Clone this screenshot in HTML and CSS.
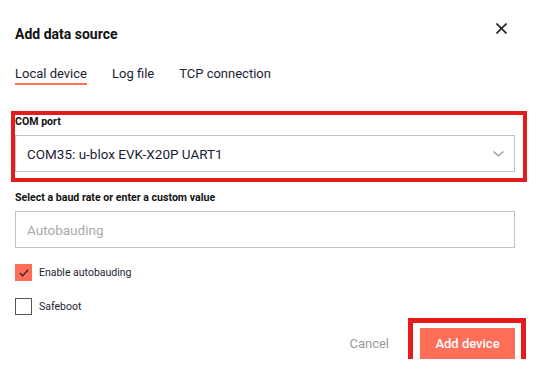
FILE: index.html
```html
<!DOCTYPE html>
<html lang="en">
<head>
    <meta charset="UTF-8">
    <title>Add data source</title>
    <link rel="stylesheet" href="styles.css">
</head>
<body>
    <div class="dialog">
        <div class="dialog-header">
            <h2 class="dialog-title">Add data source</h2>
            <button class="close-btn" aria-label="Close">
                <svg width="11" height="11" viewBox="0 0 11 11">
                    <path d="M0.5 0.5 L10.5 10.5 M10.5 0.5 L0.5 10.5" stroke="#222" stroke-width="1.6" fill="none"/>
                </svg>
            </button>
        </div>

        <div class="tabs">
            <span class="tab active">Local device</span>
            <span class="tab">Log file</span>
            <span class="tab">TCP connection</span>
        </div>

        <!-- COM port field, with the red annotation box -->
        <div class="field field-com marked">
            <label class="field-label">COM port</label>
            <div class="select">
                <span>COM35: u-blox EVK-X20P UART1</span>
                <svg class="chevron" width="11" height="6" viewBox="0 0 11 6">
                    <path d="M0.5 0.5 L5.5 5 L10.5 0.5" stroke="#999" stroke-width="1.3" fill="none"/>
                </svg>
            </div>
            <span class="mark mark-com"></span>
        </div>

        <div class="field field-baud">
            <label class="field-label">Select a baud rate or enter a custom value</label>
            <input class="text-input" type="text" placeholder="Autobauding">
        </div>

        <div class="checks">
            <label class="check">
                <span class="box checked">
                    <svg width="10" height="8" viewBox="0 0 10 8">
                        <path d="M0.8 4 L3.6 6.8 L9.2 0.8" stroke="#2b2b2b" stroke-width="1.3" fill="none"/>
                    </svg>
                </span>
                Enable autobauding
            </label>
            <label class="check">
                <span class="box"></span>
                Safeboot
            </label>
        </div>

        <div class="dialog-footer">
            <button class="btn-cancel">Cancel</button>
            <div class="marked">
                <button class="btn-primary">Add device</button>
                <span class="mark mark-add"></span>
            </div>
        </div>
    </div>
</body>
</html>
```

FILE: styles.css
```css
body {
    margin: 0;
    padding: 0;
    background: #fff;
    font-family: Roboto, "Noto Sans", sans-serif;
    color: #1b1d33;
}

.dialog {
    width: 500px;
    padding: 22px 23px 0 15px;
}

.dialog-header {
    display: flex;
    justify-content: space-between;
    align-items: flex-start;
    height: 24px;
}

.dialog-title {
    margin: 0;
    font-size: 14px;
    line-height: 24px;
    font-weight: 700;
    color: #111;
}

.close-btn {
    border: none;
    background: none;
    padding: 0;
    margin: 1px 8px 0 0;
    width: 11px;
    height: 11px;
    display: flex;
    cursor: pointer;
}

.tabs {
    display: flex;
    gap: 25px;
    margin-top: 20px;
}

.tab {
    font-size: 13px;
    line-height: 16px;
    padding-bottom: 1px;
    border-bottom: 2px solid transparent;
    color: #1b1d33;
}

.tab.active {
    border-bottom-color: #ff6e59;
}

.field {
    display: flex;
    flex-direction: column;
}

.field-com {
    margin-top: 31px;
}

.field-baud {
    margin-top: 20px;
}

.field-label {
    font-size: 10.6px;
    line-height: 12px;
    font-weight: 700;
    color: #111;
    margin-bottom: 7px;
}

.select,
.text-input {
    box-sizing: border-box;
    height: 37px;
    border: 1px solid #c2c2c2;
    font-family: inherit;
    font-size: 13.5px;
}

.select {
    display: flex;
    align-items: center;
    justify-content: space-between;
    padding: 0 10px 0 11px;
    color: #1b1d33;
}

.text-input {
    width: 100%;
    padding: 0 11px;
    outline: none;
}

.text-input::placeholder {
    color: #aaa;
}

.checks {
    display: flex;
    flex-direction: column;
    gap: 17px;
    margin-top: 16px;
}

.check {
    display: flex;
    align-items: center;
    gap: 7px;
    height: 17px;
    font-size: 10.5px;
    color: #1b1d33;
}

.box {
    box-sizing: border-box;
    width: 17px;
    height: 17px;
    border: 1px solid #555;
    display: flex;
    align-items: center;
    justify-content: center;
}

.box.checked {
    background: #ff6e59;
    border-color: #ff6e59;
}

.dialog-footer {
    display: flex;
    justify-content: flex-end;
    align-items: center;
    gap: 20px;
    margin-top: 13px;
}

.btn-cancel {
    border: none;
    background: none;
    font-family: inherit;
    font-size: 13px;
    color: #9a9a9a;
    padding: 0 11px;
}

.btn-primary {
    border: none;
    background: #ff6e59;
    color: #fff;
    font-family: inherit;
    font-size: 13px;
    font-weight: 500;
    width: 95px;
    height: 31px;
    display: block;
}

/* red annotation boxes drawn over the screenshot */
.marked {
    position: relative;
}

.mark {
    position: absolute;
    border: 4px solid #e41c1c;
    pointer-events: none;
}

.mark-com {
    left: -4px;
    right: -12px;
    top: -5px;
    bottom: -10px;
}

.mark-add {
    border-width: 5px;
    left: -12px;
    right: -11px;
    top: -10px;
    bottom: -11px;
}
```
